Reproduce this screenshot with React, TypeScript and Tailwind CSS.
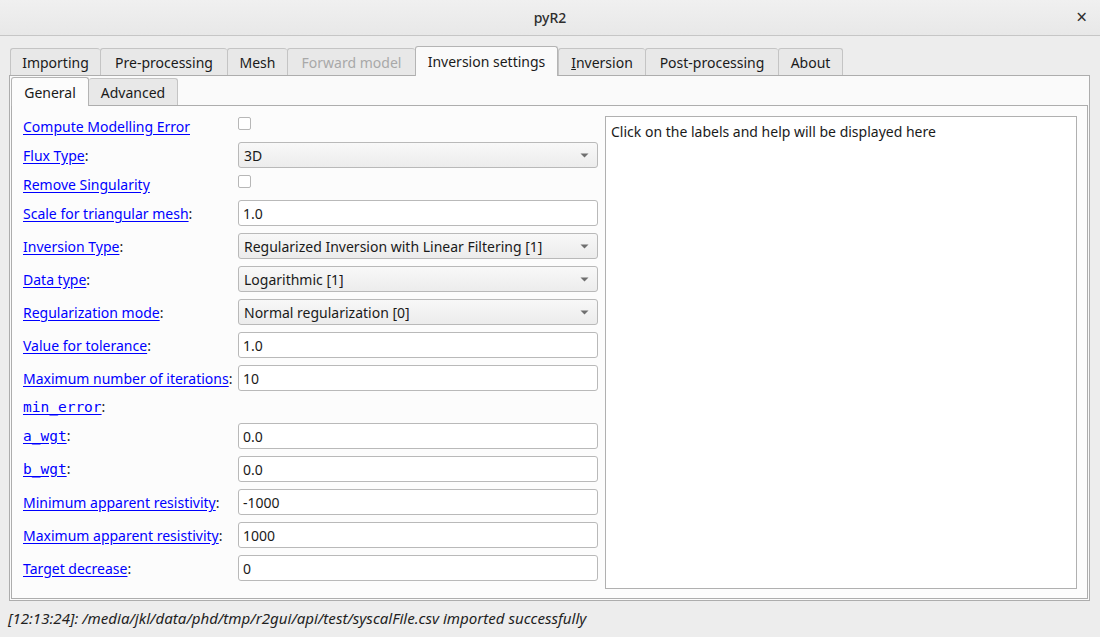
const outerTabs = [
  { label: 'Importing', w: 'w-[90px]' },
  { label: 'Pre-processing', w: 'w-[127px]' },
  { label: 'Mesh', w: 'w-[60px]' },
  { label: 'Forward model', w: 'w-[128px]', disabled: true },
  { label: 'Inversion settings', w: 'w-[143px]', active: true },
  { label: 'Inversion', w: 'w-[87px]', mnemonic: true },
  { label: 'Post-processing', w: 'w-[133px]' },
  { label: 'About', w: 'w-[65px]' },
];

type Row =
  | { kind: 'check'; label: string; colon?: boolean }
  | { kind: 'combo'; label: string; value: string }
  | { kind: 'input'; label: string; value: string }
  | { kind: 'mono'; label: string; value?: string };

const rows: Row[] = [
  { kind: 'check', label: 'Compute Modelling Error' },
  { kind: 'combo', label: 'Flux Type', value: '3D' },
  { kind: 'check', label: 'Remove Singularity' },
  { kind: 'input', label: 'Scale for triangular mesh', value: '1.0' },
  { kind: 'combo', label: 'Inversion Type', value: 'Regularized Inversion with Linear Filtering [1]' },
  { kind: 'combo', label: 'Data type', value: 'Logarithmic [1]' },
  { kind: 'combo', label: 'Regularization mode', value: 'Normal regularization [0]' },
  { kind: 'input', label: 'Value for tolerance', value: '1.0' },
  { kind: 'input', label: 'Maximum number of iterations', value: '10' },
  { kind: 'mono', label: 'min_error' },
  { kind: 'mono', label: 'a_wgt', value: '0.0' },
  { kind: 'mono', label: 'b_wgt', value: '0.0' },
  { kind: 'input', label: 'Minimum apparent resistivity', value: '-1000' },
  { kind: 'input', label: 'Maximum apparent resistivity', value: '1000' },
  { kind: 'input', label: 'Target decrease', value: '0' },
];

function Label({ text, colon, mono }: { text: string; colon: boolean; mono?: boolean }) {
  return (
    <span className="whitespace-nowrap">
      <span
        className={
          'text-[#0000ff] underline underline-offset-[2px] ' +
          (mono ? "font-['DejaVu_Sans_Mono',monospace] text-[14.5px]" : '')
        }
      >
        {text}
      </span>
      {colon && <span className="text-[#1a1a1a]">:</span>}
    </span>
  );
}

function Combo({ value }: { value: string }) {
  return (
    <div className="h-[26px] flex items-center justify-between pl-[5px] pr-[8px] rounded-[3px] border border-[#b9b9b9] bg-gradient-to-b from-[#f8f8f8] to-[#ececec] text-[#1a1a1a]">
      <span>{value}</span>
      <svg width="9" height="5" viewBox="0 0 9 5">
        <path d="M0.5 0.5 L8.5 0.5 L4.5 4.5 Z" fill="#6f6f6f" />
      </svg>
    </div>
  );
}

function Input({ value }: { value: string }) {
  return (
    <div className="h-[26px] flex items-center pl-[4px] rounded-[3px] border border-[#b9b9b9] bg-white text-[#1a1a1a]">
      {value}
    </div>
  );
}

export default function App() {
  return (
    <div className="w-[1100px] h-[637px] bg-[#ededed] flex flex-col font-['Noto_Sans',sans-serif] text-[14px] text-[#1a1a1a] overflow-hidden">
      {/* title bar */}
      <div className="relative h-[36px] shrink-0 flex items-center justify-center border-b border-[#c6c6c6] bg-gradient-to-b from-[#f0f0f0] to-[#e8e8e8]">
        <span className="text-[14px] text-[#2e2e2e] font-medium">pyR2</span>
        <span className="absolute right-[13px] top-[6px] text-[19px] leading-[22px] text-[#2e2e2e]">×</span>
      </div>

      {/* main tabs */}
      <div className="pl-[9px] pr-[10px] pt-[10px]">
        <div className="flex items-end h-[29px] pl-[1px]">
          {outerTabs.map((t) =>
            t.active ? (
              <div
                key={t.label}
                className={`${t.w} h-[30px] -mb-[1px] relative z-10 flex items-center justify-center pb-[1px] bg-[#fafafa] border border-b-0 border-[#b4b4b4] rounded-t-[3px] text-[#1a1a1a]`}
              >
                {t.label}
              </div>
            ) : (
              <div
                key={t.label}
                className={`${t.w} h-[27px] flex items-center justify-center bg-[#e8e8e8] border border-b-0 border-r-0 last:border-r border-[#c4c4c4] rounded-t-[3px] ${
                  t.disabled ? 'text-[#a8a8a8]' : 'text-[#1a1a1a]'
                }`}
              >
                {t.mnemonic ? (
                  <span>
                    <span className="underline">I</span>nversion
                  </span>
                ) : (
                  t.label
                )}
              </div>
            )
          )}
        </div>

        {/* outer pane */}
        <div className="h-[526px] border border-[#adadad] bg-[#fafafa] p-[1px] flex flex-col">
          {/* inner tabs */}
          <div className="flex items-end h-[29px]">
            <div className="w-[78px] h-[29px] -mb-[1px] relative z-10 flex items-center justify-center bg-[#fcfcfc] border border-b-0 border-[#b4b4b4] rounded-t-[3px]">
              General
            </div>
            <div className="w-[89px] h-[27px] flex items-center justify-center bg-[#e8e8e8] border border-b-0 border-l-0 border-[#c4c4c4] rounded-t-[3px]">
              Advanced
            </div>
          </div>

          {/* inner pane */}
          <div className="flex-1 border border-[#adadad] bg-[#fcfcfc] pl-[11px] pr-[10px] pt-[10px] pb-[9px] flex gap-[7px]">
            <div className="w-[575px] pt-[1px] grid grid-cols-[215px_360px] gap-y-[7px] content-start">
              {rows.map((r) => {
                if (r.kind === 'check') {
                  return (
                    <div key={r.label} className="contents">
                      <div className="h-[18px] flex items-center">
                        <Label text={r.label} colon={false} />
                      </div>
                      <div className="h-[18px] flex items-start">
                        <div className="w-[13px] h-[13px] border border-[#b7b7b7] bg-white rounded-[2px]" />
                      </div>
                    </div>
                  );
                }
                if (r.kind === 'mono' && !r.value) {
                  return (
                    <div key={r.label} className="contents">
                      <div className="h-[18px] flex items-center">
                        <Label text={r.label} colon mono />
                      </div>
                      <div className="h-[18px]" />
                    </div>
                  );
                }
                return (
                  <div key={r.label} className="contents">
                    <div className="h-[26px] flex items-center">
                      <Label text={r.label} colon mono={r.kind === 'mono'} />
                    </div>
                    {r.kind === 'combo' ? <Combo value={r.value} /> : <Input value={r.value ?? ''} />}
                  </div>
                );
              })}
            </div>

            <div className="w-[472px] h-[473px] border border-[#b0b0b0] bg-white px-[5px] pt-[4px]">
              Click on the labels and help will be displayed here
            </div>
          </div>
        </div>
      </div>

      {/* status bar */}
      <div className="flex-1 flex items-center pl-[8px] pb-[2px] italic text-[15.1px] text-[#1f1f1f]">
        [12:13:24]: /media/jkl/data/phd/tmp/r2gui/api/test/syscalFile.csv imported successfully
      </div>
    </div>
  );
}
